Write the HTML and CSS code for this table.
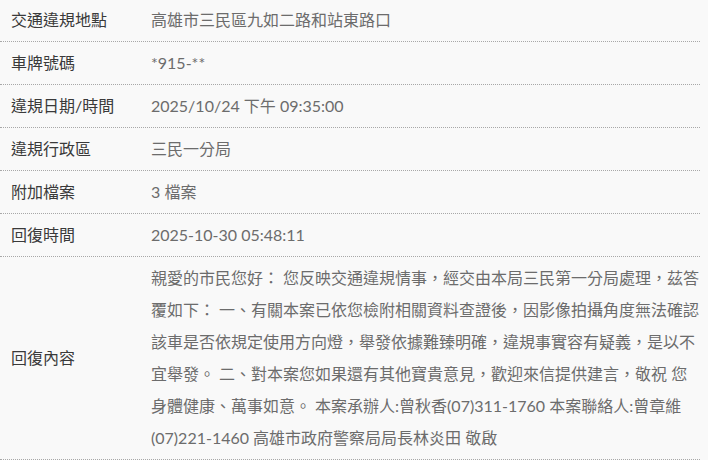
FILE: index.html
```html
<!DOCTYPE html>
<html lang="zh-Hant">
<head>
<meta charset="utf-8">
<link rel="stylesheet" href="styles.css">
</head>
<body>
<div class="detail">
  <div class="row">
    <div class="label">交通違規地點</div>
    <div class="value">高雄市三民區九如二路和站東路口</div>
  </div>
  <div class="row">
    <div class="label">車牌號碼</div>
    <div class="value">*915-**</div>
  </div>
  <div class="row">
    <div class="label">違規日期/時間</div>
    <div class="value">2025/10/24 下午 09:35:00</div>
  </div>
  <div class="row">
    <div class="label">違規行政區</div>
    <div class="value">三民一分局</div>
  </div>
  <div class="row">
    <div class="label">附加檔案</div>
    <div class="value">3 檔案</div>
  </div>
  <div class="row">
    <div class="label">回復時間</div>
    <div class="value">2025-10-30 05:48:11</div>
  </div>
  <div class="row">
    <div class="label">回復內容</div>
    <div class="value">親愛的市民您好： 您反映交通違規情事，經交由本局三民第一分局處理，茲答覆如下： 一、有關本案已依您檢附相關資料查證後，因影像拍攝角度無法確認該車是否依規定使用方向燈，舉發依據難臻明確，違規事實容有疑義，是以不宜舉發。 二、對本案您如果還有其他寶貴意見，歡迎來信提供建言，敬祝 您身體健康、萬事如意。 本案承辦人:曾秋香(07)311-1760 本案聯絡人:曾章維(07)221-1460 高雄市政府警察局局長林炎田 敬啟</div>
  </div>
</div>
</body>
</html>
```
FILE: styles.css
```css
html, body {
  margin: 0;
  padding: 0;
  background: #f9f9f9;
}
body {
  font-family: Lato, "Noto Sans CJK TC", sans-serif;
  font-size: 16px;
  line-height: 32px;
}
.detail {
  width: 700px;
}
.row {
  display: grid;
  grid-template-columns: 140px 1fr;
  align-items: center;
  padding: 5px 0;
  border-bottom: 1px dotted #a8a8a8;
}
.row:first-child {
  padding-top: 4px;
}
.label {
  padding-left: 11px;
  color: #3a3a3a;
}
.value {
  padding-left: 11px;
  color: #6c6c6c;
}
```
